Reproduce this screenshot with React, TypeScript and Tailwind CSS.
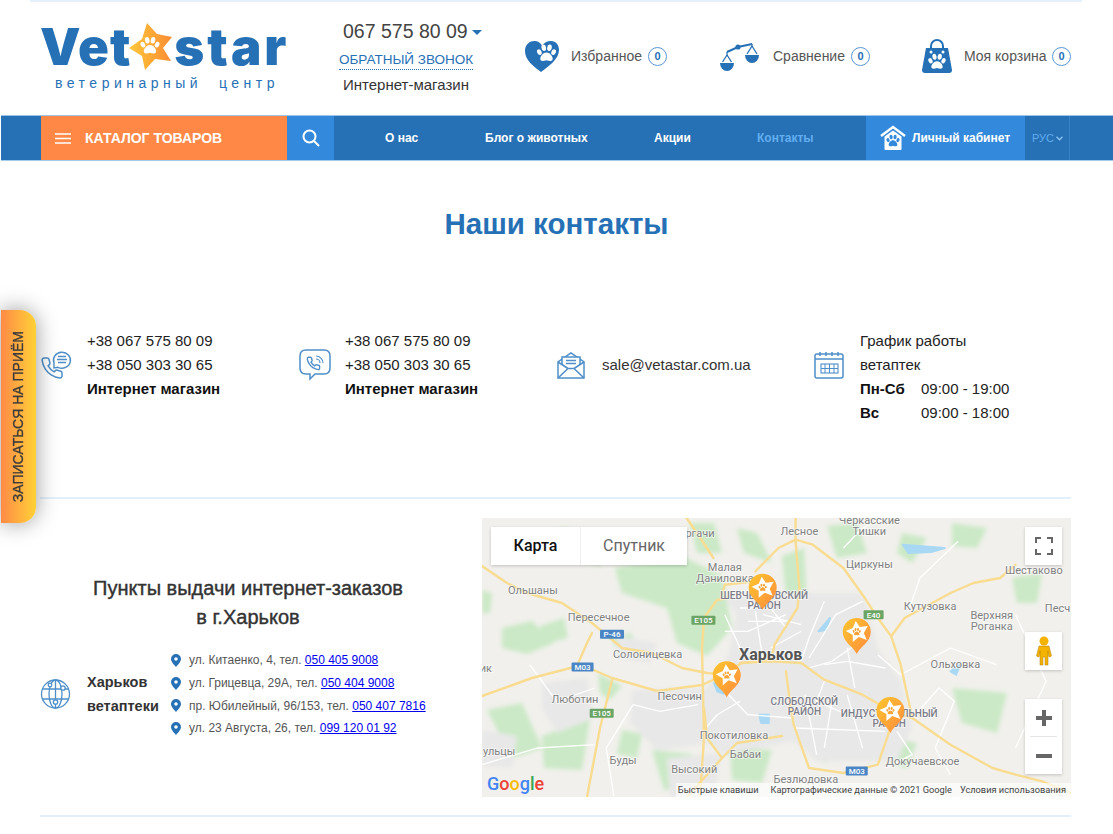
import React from "react";

const BLUE = "#2670b5";
const LINE = "#4f8ec9";

function Paw({ x = 0, y = 0, s = 1, fill = "#fff" }: { x?: number; y?: number; s?: number; fill?: string }) {
  return (
    <g transform={`translate(${x} ${y}) scale(${s})`} fill={fill}>
      <ellipse cx="-6.2" cy="-1.2" rx="1.9" ry="2.6" transform="rotate(-25 -6.2 -1.2)" />
      <ellipse cx="-2.4" cy="-5" rx="2" ry="2.8" transform="rotate(-8 -2.4 -5)" />
      <ellipse cx="2.6" cy="-5" rx="2" ry="2.8" transform="rotate(8 2.6 -5)" />
      <ellipse cx="6.2" cy="-1.2" rx="1.9" ry="2.6" transform="rotate(25 6.2 -1.2)" />
      <path d="M0 -0.8C3 -0.8 5.4 2.4 5.4 4.6 5.4 6.8 3 6.8 0 5.8 -3 6.8 -5.4 6.8 -5.4 4.6 -5.4 2.4 -3 -0.8 0 -0.8Z" />
    </g>
  );
}

function HeartIcon() {
  return (
    <svg width="34" height="31" viewBox="0 0 34 31" className="shrink-0">
      <path d="M16 31C8 25 0 19 0 10 0 3 5 0 9.500 0 13 0 15.500 2 17 4.500 19 2 22 0 26 0 31 0 34 4 34 9 34 18 24 25 16 31Z" fill={BLUE} />
      <path d="M13 21C17 25 18 27 20 26.500L27 18C30 13 30 8 27 5 24 3 18 3 15 6 12 10 11 17 13 21Z" fill={BLUE} />
      <Paw x={21.500} y={12.500} s={1.150} fill="#fff" />
    </svg>
  );
}

function ScaleIcon() {
  return (
    <svg width="41" height="31" viewBox="0 0 41 31" className="shrink-0">
      <path d="M1 22H15A7 8 0 0 1 1 22Z" fill={BLUE} />
      <path d="M26 14H40A7 8 0 0 1 26 14Z" fill={BLUE} />
      <path d="M8 11L19 6 33 3" stroke={BLUE} strokeWidth="2" fill="none" />
      <circle cx="19" cy="6" r="2.600" fill={BLUE} />
      <path d="M8 11V14M8 14L3.500 21M8 14L12.500 21M33 3V5M33 5L28 13M33 5L38 13" stroke={BLUE} strokeWidth="1.300" fill="none" />
    </svg>
  );
}

function BagIcon() {
  return (
    <svg width="30" height="34" viewBox="0 0 30 34" className="shrink-0">
      <path d="M9 11V7A6 6 0 0 1 21 7V11" stroke={BLUE} strokeWidth="2" fill="none" />
      <path d="M4 9H26L30 31Q30 34 27 34H3Q0 34 0 31Z" fill={BLUE} />
      <circle cx="9" cy="13" r="1.500" fill="#fff" />
      <circle cx="21" cy="13" r="1.500" fill="#fff" />
      <Paw x={15} y={23} s={1.050} />
    </svg>
  );
}

function HouseIcon() {
  return (
    <svg width="26" height="26" viewBox="0 0 26 26" className="shrink-0">
      <path d="M1 11L13 2 25 11" stroke="#fff" strokeWidth="2.400" fill="none" />
      <path d="M4.500 11.500L13 5.500 21.500 11.500V24Q21.500 25 20.500 25H5.500Q4.500 25 4.500 24Z" fill="#fff" />
      <Paw x={13} y={16} s={0.8} fill="#3389db" />
    </svg>
  );
}

const PHONE = "M22 16.92v3a2 2 0 0 1-2.18 2 19.79 19.79 0 0 1-8.63-3.07 19.5 19.5 0 0 1-6-6 19.79 19.79 0 0 1-3.07-8.67A2 2 0 0 1 4.11 2h3a2 2 0 0 1 2 1.72 12.84 12.84 0 0 0 .7 2.81 2 2 0 0 1-.45 2.11L8.09 9.91a16 16 0 0 0 6 6l1.27-1.27a2 2 0 0 1 2.11-.45 12.84 12.84 0 0 0 2.81.7A2 2 0 0 1 22 16.92z";

function PhoneChatIcon() {
  return (
    <svg width="32" height="30" viewBox="0 0 32 30" fill="none" stroke={LINE} strokeWidth="1.400" className="shrink-0">
      <g transform="translate(0 6)"><path d={PHONE} strokeWidth="1.500" /></g>
      <path d="M14 13A8.500 8 0 1 1 18 17.300L14 18Z" fill="#fff" />
      <path d="M18 6.500H26M17 9.500H27M18 12.500H26" strokeWidth="1.500" />
    </svg>
  );
}

function ViberIcon() {
  return (
    <svg width="32" height="32" viewBox="0 0 32 32" fill="none" stroke={LINE} strokeWidth="1.500" className="shrink-0">
      <path d="M7 1H25Q31 1 31 7V19Q31 25 25 25H16L11 30V25H7Q1 25 1 19V7Q1 1 7 1Z" />
      <g transform="translate(7 7) scale(.62)"><path d={PHONE} strokeWidth="2.200" /></g>
      <path d="M17 7A7 7 0 0 1 24 14M17 10A4 4 0 0 1 21 14" strokeWidth="1.200" />
    </svg>
  );
}

function MailIcon() {
  return (
    <svg width="28" height="27" viewBox="0 0 28 27" fill="none" stroke={LINE} strokeWidth="1.500" className="shrink-0">
      <path d="M1 10V26H27V10L14 1Z" />
      <path d="M5 13V5H23V13" fill="#fff" />
      <path d="M1 26L11 16.500H17L27 26M1 10L11 16.500M27 10L17 16.500" />
      <path d="M9 8.500H19M9 11.500H19" strokeWidth="1.300" />
    </svg>
  );
}

function CalendarIcon() {
  return (
    <svg width="30" height="28" viewBox="0 0 30 28" fill="none" stroke={LINE} strokeWidth="1.500" className="shrink-0">
      <rect x="1" y="3" width="28" height="24" rx="2" />
      <path d="M1 8H29M6 1V5M12 1V5M18 1V5M24 1V5" />
      <rect x="7" y="13" width="17" height="9" strokeWidth="1.100" />
      <path d="M7 17.500H24M11 13V22M15.500 13V22M20 13V22" strokeWidth="1" />
    </svg>
  );
}

function GlobeIcon() {
  return (
    <svg width="31" height="30" viewBox="0 0 31 30" fill="none" stroke={LINE} strokeWidth="1.300" className="shrink-0">
      <circle cx="15.500" cy="15" r="14" />
      <ellipse cx="15.500" cy="15" rx="6.500" ry="14" />
      <path d="M15.500 1V29M2 10H29M2 20H29" />
      <circle cx="23" cy="9" r="2.200" fill="#fff" />
      <circle cx="10" cy="6" r="1.800" fill="#fff" />
      <circle cx="15.500" cy="23" r="2.200" fill="#fff" />
    </svg>
  );
}

function PinSmall() {
  return (
    <svg width="10" height="13" viewBox="0 0 10 13" className="shrink-0">
      <path fillRule="evenodd" d="M5 0A5 5 0 0 1 10 5C10 8 6.500 11 5 13 3.500 11 0 8 0 5A5 5 0 0 1 5 0ZM5 3.200A1.800 1.800 0 1 0 5 6.800 1.800 1.800 0 0 0 5 3.200Z" fill={BLUE} />
    </svg>
  );
}

function Badge() {
  return (
    <span className="flex h-[19px] w-[19px] shrink-0 items-center justify-center rounded-full border border-[#5a96d2] text-[11px] font-bold text-[#2670b5]">0</span>
  );
}

/* map data: points are authored on a measuring grid and projected to the 589×279 map box */
const px = (x: number) => (x - 5) / 2.615;
const py = (y: number) => (y - 10) / 3;
type Pt = [number, number];
const line = (p: Pt[]) => p.map(([x, y]) => `${px(x).toFixed(1)},${py(y).toFixed(1)}`).join(" ");
const local = (p: Pt[]) => p.map(([x, y]) => `${x},${y}`).join(" ");

/* these sets are already in map pixels */
const greens: Pt[][] = [
  [[133, 50], [200, 38], [240, 58], [250, 110], [225, 138], [195, 125], [185, 90], [140, 75]],
  [[208, 5], [232, 5], [240, 35], [215, 35]],
  [[20, 110], [50, 103], [72, 125], [45, 136], [20, 130]],
  [[58, 108], [82, 100], [86, 120], [62, 126]],
  [[0, 72], [10, 75], [8, 95], [0, 95]],
  [[5, 192], [40, 185], [60, 230], [30, 240]],
  [[60, 218], [108, 200], [100, 252], [62, 250]],
  [[140, 212], [160, 216], [155, 240], [135, 236]],
  [[116, 155], [140, 168], [128, 182], [118, 175]],
  [[170, 232], [210, 236], [218, 268], [182, 272]],
  [[80, 8], [120, 30], [118, 48], [88, 40]],
  [[175, 190], [190, 200], [185, 215], [172, 210]],
  [[228, 190], [262, 195], [255, 225], [232, 222]],
  [[248, 230], [290, 232], [280, 265], [250, 262]],
  [[255, 10], [275, 15], [290, 45], [262, 35]],
  [[300, 38], [322, 30], [325, 85], [305, 90]],
  [[345, 8], [375, 5], [385, 35], [355, 40]],
  [[330, 105], [345, 98], [338, 120], [330, 120]],
  [[420, 15], [445, 20], [430, 45], [415, 35]],
  [[470, 5], [505, 10], [495, 30], [470, 28]],
  [[470, 170], [525, 175], [515, 215], [480, 205]],
  [[530, 60], [560, 55], [555, 85], [535, 85]],
  [[330, 220], [350, 215], [345, 245], [330, 240]],
  [[410, 220], [435, 225], [425, 250], [408, 245]],
  [[130, 120], [150, 115], [152, 128], [135, 132]],
];
const towns: Pt[][] = [
  [[60, 165], [105, 160], [112, 200], [75, 215], [60, 190]],
  [[150, 172], [225, 170], [230, 225], [175, 232], [148, 205]],
  [[185, 240], [240, 235], [232, 279], [188, 279]],
  [[0, 212], [35, 218], [30, 250], [0, 248]],
  [[135, 118], [175, 125], [168, 145], [135, 140]],
];
const localYellows: Pt[][] = [
  [[0, 48], [25, 65], [45, 75], [80, 85], [110, 105], [140, 130], [170, 135], [200, 150], [225, 155], [250, 157]],
  [[0, 178], [50, 160], [100, 147], [130, 160], [175, 173], [220, 167], [235, 160], [260, 145], [285, 142]],
  [[105, 279], [118, 210], [130, 162]],
  [[218, 279], [222, 220], [220, 130], [222, 100], [235, 82], [245, 80]],
  [[110, 115], [105, 125], [95, 148]],
  [[222, 190], [225, 220], [240, 240], [205, 279]],
  [[240, 240], [255, 225], [300, 218]],
];
/* the remaining road sets use the measuring grid */
const yellows: Pt[][] = [
  [[680, 445], [760, 440], [840, 445], [900, 495], [1000, 540], [1075, 590], [1130, 610], [1230, 690], [1340, 760], [1400, 780], [1470, 800], [1545, 835]],
  [[630, 250], [640, 210], [720, 200]],
  [[720, 170], [780, 100], [825, 75], [870, 90], [950, 160], [1000, 240], [1040, 310], [1075, 365], [1100, 450], [1130, 610]],
  [[825, 10], [825, 80], [835, 220], [830, 280], [770, 390], [760, 440]],
  [[1075, 365], [1110, 310], [1230, 235], [1290, 205], [1360, 190], [1400, 150]],
  [[800, 470], [810, 560], [820, 630], [860, 760], [950, 775], [1040, 750], [1070, 650], [1075, 620]],
  [[540, 10], [570, 60], [610, 130]],
];
const whites: Pt[][] = [
  [[640, 300], [680, 400], [700, 440]], [[720, 290], [740, 440]], [[800, 300], [700, 350], [640, 350]],
  [[840, 350], [760, 400]], [[900, 260], [860, 370], [840, 440]], [[1000, 260], [930, 300], [860, 430]],
  [[1020, 360], [920, 440], [860, 460]], [[960, 400], [980, 520]], [[1060, 460], [960, 440], [900, 450]],
  [[1040, 420], [1100, 480], [1230, 400], [1350, 450]], [[680, 560], [620, 600], [590, 640]],
  [[650, 540], [700, 600], [820, 610]], [[850, 540], [880, 720]], [[920, 560], [900, 700]],
  [[960, 540], [1000, 700]], [[820, 640], [1060, 650]], [[400, 570], [470, 590], [570, 570]],
  [[400, 570], [330, 700], [350, 845]], [[1130, 610], [1200, 520], [1240, 560], [1190, 700], [1230, 780]],
  [[1090, 650], [1130, 720], [1060, 760]], [[5, 750], [150, 700], [300, 690]], [[130, 450], [200, 560], [300, 520]],
  [[1250, 80], [1150, 190], [1120, 290]], [[950, 100], [1000, 40], [1050, 15]],
  [[740, 300], [840, 330]], [[660, 440], [640, 540]], [[1400, 300], [1480, 500], [1400, 700]],
  [[680, 280], [760, 280], [800, 340]], [[700, 320], [800, 320]], [[900, 500], [880, 560], [960, 600]],
];
const blues: Pt[][] = [
  [[1105, 90], [1215, 100], [1180, 112], [1120, 115]],
  [[885, 350], [915, 310], [905, 345]],
  [[612, 505], [640, 515], [645, 540], [620, 530]],
  [[730, 600], [755, 600], [755, 625], [735, 625]],
  [[1230, 470], [1255, 450], [1245, 480]],
];
type L = [string, number, number, number?];
const labels: L[] = [
  ["ргачи", 575, 55], ["Лесное", 835, 50], ["Черкасские", 1018, 17], ["Тишки", 1018, 50], ["Циркуны", 1018, 147],
  ["Шестаково", 1448, 165], ["Малая", 640, 156], ["Даниловка", 640, 190], ["Ольшаны", 138, 225], ["Пересечное", 310, 306],
  ["Солоницевка", 438, 417], ["Кутузовка", 1177, 273], ["Верхняя", 1338, 300], ["Роганка", 1338, 334], ["Песч", 1510, 281],
  ["Ольховка", 1243, 447], ["Люботин", 248, 553], ["Песочин", 522, 544], ["Покотиловка", 664, 662], ["Бабаи", 694, 719],
  ["Буды", 374, 736], ["Высокий", 560, 764], ["Безлюдовка", 852, 793], ["Докучаевское", 1157, 739], ["ульцы", 50, 708], ["ик", 15, 459],
];
const bold: L[] = [
  ["ШЕВЧЕНКОВСКИЙ", 743, 240, 10], ["РАЙОН", 743, 271, 10], ["СЛОБОДСКОЙ", 848, 560, 10], ["РАЙОН", 848, 589, 10],
  ["ИНДУСТРИАЛЬНЫЙ", 1070, 596, 10], ["РАЙОН", 1070, 625, 10],
];
const shields: [string, number, number, string, number][] = [
  ["E105", 584, 317, "#6aa566", 24], ["P-46", 345, 359, "#4a86c5", 24], ["M03", 268, 457, "#4a86c5", 22], ["E105", 318, 596, "#6aa566", 24],
  ["E40", 1029, 300, "#6aa566", 20], ["M03", 985, 769, "#4a86c5", 22],
];
const pins: Pt[] = [[739, 285], [985, 418], [645, 548], [1073, 655]];

function MapDrawing() {
  return (
    <svg viewBox="0 0 589 279" className="block h-full w-full" style={{ fontFamily: "Roboto, sans-serif" }}>
      <defs>
        <linearGradient id="pinfill" x1="0" y1="0" x2="1" y2="1">
          <stop offset="0" stopColor="#ffc62e" />
          <stop offset="1" stopColor="#ff8a3d" />
        </linearGradient>
        <filter id="soft" x="-5%" y="-5%" width="110%" height="110%"><feGaussianBlur stdDeviation="2" /></filter>
        <filter id="softer" x="-5%" y="-5%" width="110%" height="110%"><feGaussianBlur stdDeviation="0.4" /></filter>
      </defs>
      <rect width="589" height="279" fill="#f1f0ec" />
      <g filter="url(#soft)">
        {greens.map((g, i) => (
          <polygon key={i} points={local(g)} fill="#cbe9c6" />
        ))}
        {towns.map((g, i) => (
          <polygon key={i} points={local(g)} fill="#e8e8e8" />
        ))}
        <polygon
          points={line([[640, 250], [850, 235], [1000, 235], [1040, 400], [1100, 500], [1130, 640], [1090, 740], [880, 740], [820, 680], [640, 720], [590, 680], [590, 520], [650, 420], [670, 300]])}
          fill="#e8e8e8"
        />
      </g>
      <g filter="url(#softer)">
        {blues.map((g, i) => (
          <polygon key={i} points={line(g)} fill="#a8d8f4" stroke="#a8d8f4" strokeWidth="2" strokeLinejoin="round" />
        ))}
        {whites.map((g, i) => (
          <polyline key={i} points={line(g)} fill="none" stroke="#fff" strokeWidth="1.300" strokeLinejoin="round" />
        ))}
        {localYellows.map((g, i) => (
          <polyline key={i} points={local(g)} fill="none" stroke="#f9dc90" strokeWidth="2.400" strokeLinejoin="round" strokeLinecap="round" />
        ))}
        {yellows.map((g, i) => (
          <polyline key={i} points={line(g)} fill="none" stroke="#f9dc90" strokeWidth="2.400" strokeLinejoin="round" strokeLinecap="round" />
        ))}
      </g>
      {labels.map(([t, x, y, s], i) => (
        <text key={i} x={px(x)} y={py(y) + 4} textAnchor="middle" fontSize={s ?? 11} fill="#808080" stroke="#ffffffb0" strokeWidth="1.500" paintOrder="stroke">{t}</text>
      ))}
      {bold.map(([t, x, y, s], i) => (
        <text key={i} x={px(x)} y={py(y) + 4} textAnchor="middle" fontSize={s} fontWeight="500" fill="#7c7c88" stroke="#ffffffb0" strokeWidth="1.500" paintOrder="stroke">{t}</text>
      ))}
      <text x={px(760)} y={py(420) + 5} textAnchor="middle" fontSize="16" fontWeight="700" fill="#555" stroke="#ffffffb0" strokeWidth="2" paintOrder="stroke">Харьков</text>
      {shields.map(([t, x, y, c, w], i) => (
        <g key={i}>
          <rect x={px(x) - w / 2} y={py(y) - 4.500} width={w} height="9" rx="1" fill={c} />
          <text x={px(x)} y={py(y) + 3} textAnchor="middle" fontSize="8" fontWeight="500" fill="#fff">{t}</text>
        </g>
      ))}
      {pins.map(([x, y], i) => (
        <g key={i} transform={`translate(${px(x)} ${py(y)})`}>
          <path d="M0 0C-3 -7 -14 -12 -14 -22A14 14 0 1 1 14 -22C14 -12 3 -7 0 0Z" fill="url(#pinfill)" />
          <path d="M-1 -33L3 -27 11 -28 7 -21 10 -14 2 -17 -4 -12 -4 -19 -11 -23 -4 -26Z" fill="#fff" />
          <Paw x={0} y={-22} s={0.5} fill="#f7a335" />
        </g>
      ))}
    </svg>
  );
}

function Address({ text, tel }: { text: string; tel: string }) {
  return (
    <div className="flex h-[22.700px] items-center gap-[8px] text-[12px] text-[#555]">
      <PinSmall />
      <span className="whitespace-nowrap">
        {text} <a href="#" className="text-[#0000ee] underline">{tel}</a>
      </span>
    </div>
  );
}

export default function App() {
  return (
    <div className="relative h-[834px] w-[1113px] overflow-hidden bg-white text-[14px] text-[#333]" style={{ fontFamily: '"Liberation Sans", Arial, sans-serif' }}>
      <div className="ml-[30px] h-[2px] w-[1052px] bg-[#e6f0fb]" />

      <header className="flex h-[113px] items-start">
        <div className="ml-[40px] w-[303px] pt-[20px]">
          <div className="flex h-[49px] items-center text-[51px] font-black leading-none text-[#2670b5]" style={{ fontFamily: "Inter, sans-serif" }}>
            <span className="tracking-[1px]">Vet</span>
            <svg width="44" height="48" viewBox="132 25 44 48" className="-ml-[2px] shrink-0">
              <defs>
                <linearGradient id="lstar" x1="0" y1="0.5" x2="1" y2="0.5">
                  <stop offset="0" stopColor="#ffc83a" />
                  <stop offset="1" stopColor="#fb8b32" />
                </linearGradient>
              </defs>
              <path d="M150 25L160 36 175 39 166 50 174 63 158 61 148 72 145 58 132 50 145 41Z" fill="url(#lstar)" />
              <Paw x={153} y={48} s={1.150} />
            </svg>
            <span className="ml-[1px] tracking-[3px]">star</span>
          </div>
          <div className="mt-[2px] whitespace-pre pl-[15px] text-[14px] leading-[20px] tracking-[4.500px] text-[#2670b5]">ветеринарный  центр</div>
        </div>

        <div className="w-[182px] pt-[17px]">
          <div className="flex h-[26px] items-center text-[19.500px] text-[#444]">
            067 575 80 09
            <span className="ml-[4px] mt-[1px] h-0 w-0 border-x-[5px] border-t-[5px] border-x-transparent border-t-[#2670b5]" />
          </div>
          <div className="-ml-[4px] mt-[5px] w-[134px] whitespace-nowrap border-b border-dotted border-[#2670b5] text-[13.500px] leading-[19px] text-[#2670b5]">ОБРАТНЫЙ ЗВОНОК</div>
          <div className="mt-[5px] text-[15px] leading-[20px] text-[#333]">Интернет-магазин</div>
        </div>

        <div className="flex h-[108px] w-[194px] items-center">
          <HeartIcon />
          <span className="ml-[12px] w-[77px] text-[#555]">Избранное</span>
          <Badge />
        </div>
        <div className="flex h-[108px] w-[203px] items-center">
          <ScaleIcon />
          <span className="ml-[13px] w-[78px] text-[#555]">Сравнение</span>
          <Badge />
        </div>
        <div className="flex h-[108px] items-center">
          <BagIcon />
          <span className="ml-[12px] w-[88px] text-[#555]">Моя корзина</span>
          <Badge />
        </div>
      </header>

      <nav className="ml-[1px] flex h-[46px] border-y border-t-[#9dc3e6] border-b-[#a9cbea] bg-[#2670b5] text-[12px] font-bold text-white">
        <div className="w-[40px]" />
        <div className="flex w-[246px] items-center bg-[#ff8847] pl-[14px]">
          <svg width="16" height="11" viewBox="0 0 16 11" className="shrink-0">
            <path d="M0 1H16M0 5.500H16M0 10H16" stroke="#fff" strokeWidth="1.600" />
          </svg>
          <span className="ml-[14px] text-[14px]">КАТАЛОГ ТОВАРОВ</span>
        </div>
        <div className="flex w-[47px] items-center justify-center bg-[#3389db]">
          <svg width="18" height="18" viewBox="0 0 18 18" fill="none" stroke="#fff" strokeWidth="2">
            <circle cx="7.500" cy="7.500" r="6" />
            <path d="M12 12L17 17" />
          </svg>
        </div>
        <div className="flex w-[532px] items-center">
          <span className="ml-[51px] w-[100px]">О нас</span>
          <span className="w-[169px]">Блог о животных</span>
          <span className="w-[103px]">Акции</span>
          <span className="text-[#62aef0]">Контакты</span>
        </div>
        <div className="flex w-[159px] items-center bg-[#3389db] pl-[14px]">
          <HouseIcon />
          <span className="ml-[6px] whitespace-nowrap">Личный кабинет</span>
        </div>
        <div className="flex w-[45px] items-center border-r border-[#3a82c6] pl-[7px] text-[11px] font-normal text-[#62aef0]">
          РУС
          <svg width="7" height="5" viewBox="0 0 7 5" className="ml-[2px]" fill="none" stroke="#8fc4f2" strokeWidth="1.300">
            <path d="M.5 .8L3.500 3.800 6.500 .8" />
          </svg>
        </div>
      </nav>

      <h1 className="pt-[44px] text-center text-[29.500px] font-bold leading-[38px] text-[#2670b5]">Наши контакты</h1>

      <section className="mt-[86px] flex h-[168px] pl-[40px] text-[15px] leading-[24px] text-[#222]">
        <div className="flex w-[259px]">
          <div className="flex h-[72px] w-[47px] items-center"><PhoneChatIcon /></div>
          <div>
            <div>+38 067 575 80 09</div>
            <div>+38 050 303 30 65</div>
            <div className="font-bold text-[#111]">Интернет магазин</div>
          </div>
        </div>
        <div className="flex w-[258px]">
          <div className="flex h-[72px] w-[46px] items-center"><ViberIcon /></div>
          <div>
            <div>+38 067 575 80 09</div>
            <div>+38 050 303 30 65</div>
            <div className="font-bold text-[#111]">Интернет магазин</div>
          </div>
        </div>
        <div className="flex w-[257px]">
          <div className="flex h-[72px] w-[45px] items-center"><MailIcon /></div>
          <div className="pt-[24px] text-[#333]">sale@vetastar.com.ua</div>
        </div>
        <div className="flex">
          <div className="flex h-[72px] w-[46px] items-center"><CalendarIcon /></div>
          <div className="w-[160px]">
            <div>График работы</div>
            <div>ветаптек</div>
            <div className="flex"><b className="w-[61px] text-[#111]">Пн-Сб</b><span>09:00 - 19:00</span></div>
            <div className="flex"><b className="w-[61px] text-[#111]">Вс</b><span>09:00 - 18:00</span></div>
          </div>
        </div>
      </section>

      <div className="ml-[40px] h-[2px] w-[1031px] bg-[#e3f0fb]" />

      <section className="ml-[40px] flex w-[1031px] pt-[19px]">
        <div className="w-[442px]">
          <h2 className="w-[416px] pt-[56px] text-center text-[20px] font-normal leading-[29px] text-[#333] [-webkit-text-stroke:0.4px_#333]">
            Пункты выдачи интернет-заказов<br />в г.Харьков
          </h2>
          <div className="mt-[17px] flex items-center">
            <div className="w-[47px]"><GlobeIcon /></div>
            <div className="w-[84px] text-[14.500px] font-bold leading-[24px] text-[#333]">Харьков<br />ветаптеки</div>
            <div>
              <Address text="ул. Китаенко, 4, тел." tel="050 405 9008" />
              <Address text="ул. Грицевца, 29А, тел." tel="050 404 9008" />
              <Address text="пр. Юбилейный, 96/153, тел." tel="050 407 7816" />
              <Address text="ул. 23 Августа, 26, тел." tel="099 120 01 92" />
            </div>
          </div>
        </div>

        <div className="relative h-[279px] w-[589px] overflow-hidden" style={{ fontFamily: "Roboto, sans-serif" }}>
          <MapDrawing />
          <div className="absolute left-[9px] top-[9px] flex h-[38px] bg-white text-[16px] shadow-[0_1px_3px_rgba(0,0,0,0.2)]">
            <span className="flex w-[89px] items-center justify-center font-medium text-[#111]">Карта</span>
            <span className="flex w-[107px] items-center justify-center border-l border-[#eee] text-[#666]">Спутник</span>
          </div>
          <div className="absolute right-[9px] top-[9px] flex h-[38px] w-[37px] items-center justify-center bg-white shadow-[0_1px_3px_rgba(0,0,0,0.2)]">
            <svg width="18" height="18" viewBox="0 0 18 18" fill="none" stroke="#666" strokeWidth="2">
              <path d="M1 6V1H6M12 1H17V6M17 12V17H12M6 17H1V12" />
            </svg>
          </div>
          <div className="absolute right-[9px] top-[114px] flex h-[38px] w-[37px] items-center justify-center bg-white shadow-[0_1px_3px_rgba(0,0,0,0.2)]">
            <svg width="16" height="30" viewBox="0 0 16 30">
              <circle cx="8" cy="5" r="4.500" fill="#f5b301" />
              <path d="M3 10H13L15.500 20 13 21 12 15V29H9V21H7V29H4V15L3 21 .5 20Z" fill="#f5b301" stroke="#b37a00" strokeWidth=".5" />
            </svg>
          </div>
          <div className="absolute right-[9px] top-[181px] flex h-[75px] w-[37px] flex-col items-center bg-white shadow-[0_1px_3px_rgba(0,0,0,0.2)]">
            <div className="flex h-[37px] items-center justify-center">
              <svg width="18" height="18" viewBox="0 0 18 18"><path d="M7 1H11V7H17V11H11V17H7V11H1V7H7Z" fill="#666" /></svg>
            </div>
            <div className="h-px w-[27px] bg-[#e6e6e6]" />
            <div className="flex h-[37px] items-center justify-center">
              <svg width="18" height="18" viewBox="0 0 18 18"><path d="M1 7H17V11H1Z" fill="#666" /></svg>
            </div>
          </div>
          <div className="absolute bottom-[3px] left-[5px] text-[18px] font-medium leading-[20px]">
            <span className="text-[#4285f4]">G</span><span className="text-[#ea4335]">o</span><span className="text-[#fbbc05]">o</span><span className="text-[#4285f4]">g</span><span className="text-[#34a853]">l</span><span className="text-[#ea4335]">e</span>
          </div>
          <div className="absolute bottom-0 right-0 flex h-[14px] items-center whitespace-nowrap bg-[#ffffffa8] pl-[2px] pr-[5px] text-[9.250px] text-[#444]">
            <span className="mr-[12px]">Быстрые клавиши</span>
            <span className="mr-[8px]">Картографические данные © 2021 Google</span>
            <span>Условия использования</span>
          </div>
        </div>
      </section>

      <div className="ml-[40px] mt-[18px] h-[2px] w-[1031px] bg-[#e3f0fb]" />

      <div className="absolute left-[1px] top-[310px] flex h-[213px] w-[35px] items-center justify-center rounded-r-[16px] bg-gradient-to-r from-[#ff8a45] to-[#ffd035] shadow-[0_0_22px_rgba(0,0,0,0.4)]">
        <span className="rotate-180 whitespace-nowrap text-[14px] font-normal text-[#3b3b3b] [-webkit-text-stroke:0.3px_#3b3b3b] [writing-mode:vertical-rl]">ЗАПИСАТЬСЯ НА ПРИЁМ</span>
      </div>
    </div>
  );
}
